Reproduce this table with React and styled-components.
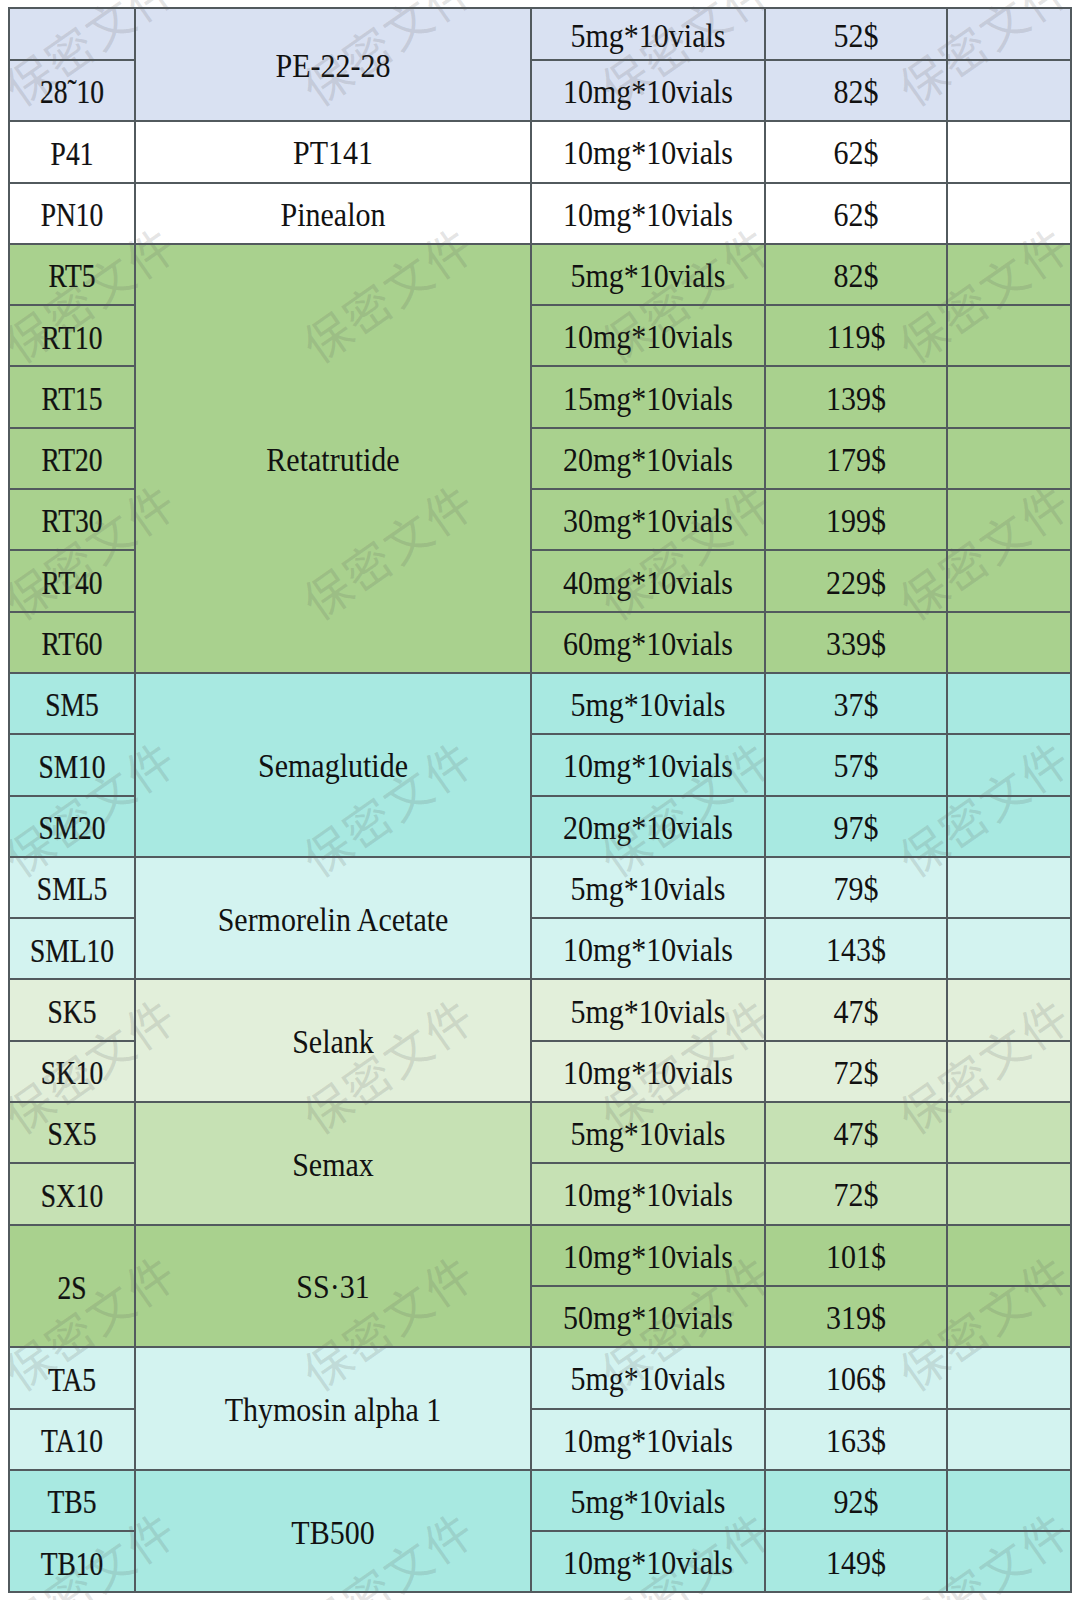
import React from 'react'
import styled, { createGlobalStyle } from 'styled-components'

const GlobalStyle = createGlobalStyle`
  html, body {
    margin: 0;
    padding: 0;
    background: #ffffff;
  }
`

const groups = [
    { bg: '#d9e1f2', codes: ['', '28\u02DC10'], name: 'PE-22-28', items: [['5mg*10vials', '52$'], ['10mg*10vials', '82$']] },
    { bg: '#ffffff', codes: ['P41'], name: 'PT141', items: [['10mg*10vials', '62$']] },
    { bg: '#ffffff', codes: ['PN10'], name: 'Pinealon', items: [['10mg*10vials', '62$']] },
    {
        bg: '#a9d18e',
        codes: ['RT5', 'RT10', 'RT15', 'RT20', 'RT30', 'RT40', 'RT60'],
        name: 'Retatrutide',
        items: [
            ['5mg*10vials', '82$'],
            ['10mg*10vials', '119$'],
            ['15mg*10vials', '139$'],
            ['20mg*10vials', '179$'],
            ['30mg*10vials', '199$'],
            ['40mg*10vials', '229$'],
            ['60mg*10vials', '339$'],
        ],
    },
    { bg: '#a8e9e1', codes: ['SM5', 'SM10', 'SM20'], name: 'Semaglutide', items: [['5mg*10vials', '37$'], ['10mg*10vials', '57$'], ['20mg*10vials', '97$']] },
    { bg: '#d3f3f0', codes: ['SML5', 'SML10'], name: 'Sermorelin Acetate', items: [['5mg*10vials', '79$'], ['10mg*10vials', '143$']] },
    { bg: '#e2efda', codes: ['SK5', 'SK10'], name: 'Selank', items: [['5mg*10vials', '47$'], ['10mg*10vials', '72$']] },
    { bg: '#c6e1b4', codes: ['SX5', 'SX10'], name: 'Semax', items: [['5mg*10vials', '47$'], ['10mg*10vials', '72$']] },
    { bg: '#a9d18e', codes: ['2S'], name: 'SS\u00B731', items: [['10mg*10vials', '101$'], ['50mg*10vials', '319$']] },
    { bg: '#d3f3f0', codes: ['TA5', 'TA10'], name: 'Thymosin alpha 1', items: [['5mg*10vials', '106$'], ['10mg*10vials', '163$']] },
    { bg: '#a8e9e1', codes: ['TB5', 'TB10'], name: 'TB500', items: [['5mg*10vials', '92$'], ['10mg*10vials', '149$']] },
]

const App = () => {
    return (
        <Page>
            <GlobalStyle />
            <Sheet>
                <colgroup>
                    <col style={{ width: 126 }} />
                    <col style={{ width: 396 }} />
                    <col style={{ width: 234 }} />
                    <col style={{ width: 182 }} />
                    <col style={{ width: 124 }} />
                </colgroup>
                <tbody>
                    {groups.map((group, g) =>
                        group.items.map((item, i) => {
                            const perRow = group.codes.length === group.items.length
                            return (
                                <Row key={group.name + i} $bg={group.bg} $first={g === 0 && i === 0}>
                                    {perRow ? (
                                        <CodeCell>
                                            <CodeText>{group.codes[i]}</CodeText>
                                        </CodeCell>
                                    ) : i === 0 ? (
                                        <CodeCell rowSpan={group.items.length}>
                                            <CodeText>{group.codes[0]}</CodeText>
                                        </CodeCell>
                                    ) : null}
                                    {i === 0 ? (
                                        <Cell rowSpan={group.items.length}>
                                            <Text>{group.name}</Text>
                                        </Cell>
                                    ) : null}
                                    <Cell>
                                        <Text>{item[0]}</Text>
                                    </Cell>
                                    <Cell>
                                        <Text>{item[1]}</Text>
                                    </Cell>
                                    <Cell />
                                </Row>
                            )
                        })
                    )}
                </tbody>
            </Sheet>
            <Watermarks>
                {Array.from({ length: 28 }).map((_, i) => (
                    <MarkSlot key={i}>
                        <Mark>保密文件</Mark>
                    </MarkSlot>
                ))}
            </Watermarks>
        </Page>
    )
}

export default App

const Page = styled.div`
    position: relative;
    width: 1078px;
    height: 1600px;
    padding: 7px 0 0 8px;
    box-sizing: border-box;
    overflow: hidden;
    background: #ffffff;
`

const Sheet = styled.table`
    border-collapse: collapse;
    table-layout: fixed;
    width: 1062px;
    border: 2px solid #525a5e;
    font-family: "Liberation Serif", "Times New Roman", serif;
    color: #111111;
`

const Row = styled.tr`
    height: ${props => (props.$first ? '52px' : '61.3px')};
    background-color: ${props => props.$bg};
`

const Cell = styled.td`
    border: 2px solid #525a5e;
    padding: 3px 0 0 0;
    text-align: center;
    vertical-align: middle;
    font-size: 30px;
    line-height: 1;
    white-space: nowrap;
`

const CodeCell = styled(Cell)`
    font-size: 27.5px;
`

const Text = styled.span`
    display: inline-block;
    transform: scaleY(1.12);
`

const CodeText = styled(Text)`
    transform: scaleY(1.2);
    -webkit-text-stroke: 0.2px #111111;
`

const Watermarks = styled.div`
    position: absolute;
    top: -93px;
    left: -60px;
    display: grid;
    grid-template-columns: repeat(4, 298px);
    grid-auto-rows: 257px;
    pointer-events: none;
    z-index: 2;
`

const MarkSlot = styled.div`
    display: flex;
    align-items: center;
    justify-content: center;
`

const Mark = styled.span`
    display: inline-block;
    transform: rotate(-35deg);
    font-family: "Noto Sans CJK SC", sans-serif;
    font-weight: 400;
    font-size: 47px;
    letter-spacing: 2px;
    color: rgba(90, 90, 90, 0.17);
    white-space: nowrap;
`
